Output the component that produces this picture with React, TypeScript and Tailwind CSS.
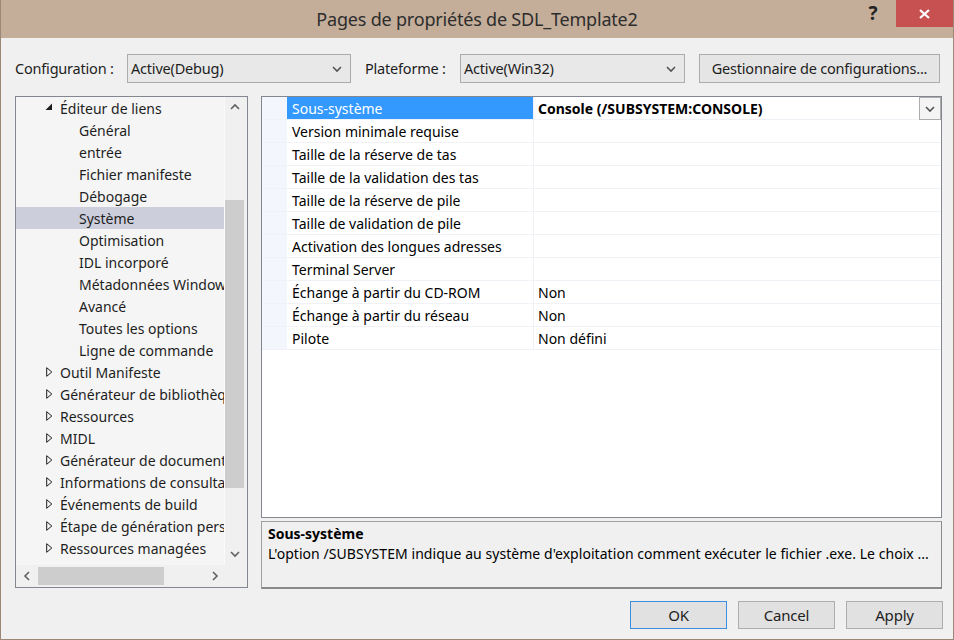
import React from 'react';

type TreeItem = {
  label: string;
  level: 1 | 2;
  expander?: 'open' | 'closed';
  selected?: boolean;
};

const treeItems: TreeItem[] = [
  { label: 'Éditeur de liens', level: 1, expander: 'open' },
  { label: 'Général', level: 2 },
  { label: 'entrée', level: 2 },
  { label: 'Fichier manifeste', level: 2 },
  { label: 'Débogage', level: 2 },
  { label: 'Système', level: 2, selected: true },
  { label: 'Optimisation', level: 2 },
  { label: 'IDL incorporé', level: 2 },
  { label: 'Métadonnées Windows', level: 2 },
  { label: 'Avancé', level: 2 },
  { label: 'Toutes les options', level: 2 },
  { label: 'Ligne de commande', level: 2 },
  { label: 'Outil Manifeste', level: 1, expander: 'closed' },
  { label: 'Générateur de bibliothèque', level: 1, expander: 'closed' },
  { label: 'Ressources', level: 1, expander: 'closed' },
  { label: 'MIDL', level: 1, expander: 'closed' },
  { label: 'Générateur de document XML', level: 1, expander: 'closed' },
  { label: 'Informations de consultation', level: 1, expander: 'closed' },
  { label: 'Événements de build', level: 1, expander: 'closed' },
  { label: 'Étape de génération personnalisée', level: 1, expander: 'closed' },
  { label: 'Ressources managées', level: 1, expander: 'closed' },
];

const props: { name: string; value: string }[] = [
  { name: 'Sous-système', value: 'Console (/SUBSYSTEM:CONSOLE)' },
  { name: 'Version minimale requise', value: '' },
  { name: 'Taille de la réserve de tas', value: '' },
  { name: 'Taille de la validation des tas', value: '' },
  { name: 'Taille de la réserve de pile', value: '' },
  { name: 'Taille de validation de pile', value: '' },
  { name: 'Activation des longues adresses', value: '' },
  { name: 'Terminal Server', value: '' },
  { name: 'Échange à partir du CD-ROM', value: 'Non' },
  { name: 'Échange à partir du réseau', value: 'Non' },
  { name: 'Pilote', value: 'Non défini' },
];

// small chevrons used by combos and scrollbars
const Chevron = ({ dir, color = '#606060' }: { dir: 'up' | 'down' | 'left' | 'right'; color?: string }) => {
  const pts = {
    up: '1,6 5,2 9,6',
    down: '1,2 5,6 9,2',
    left: '6,1 2,5 6,9',
    right: '2,1 6,5 2,9',
  }[dir];
  const vertical = dir === 'up' || dir === 'down';
  return (
    <svg width={vertical ? 10 : 8} height={vertical ? 8 : 10} viewBox={vertical ? '0 0 10 8' : '0 0 8 10'}>
      <polyline points={pts} fill="none" stroke={color} strokeWidth="1.6" />
    </svg>
  );
};

const Combo = ({ text, width }: { text: string; width: string }) => (
  <div className={`${width} h-[29px] flex items-center justify-between border border-[#acacac] bg-[#e8e8e8] pl-[3px] pr-[8px]`}>
    <span>{text}</span>
    <Chevron dir="down" color="#555" />
  </div>
);

const WinButton = ({ label, primary }: { label: string; primary?: boolean }) => (
  <div
    className={`w-[97px] h-[28px] flex items-center justify-center bg-[#e1e1e1] border ${
      primary ? 'border-[#3c8ee0]' : 'border-[#adadad]'
    }`}
  >
    {label}
  </div>
);

export default function App() {
  return (
    <div className="w-[954px] h-[640px] bg-[#f0f0f0] border-x border-b border-[#9c8876] flex flex-col font-['Noto_Sans','DejaVu_Sans',sans-serif] text-[14px] text-[#1e1e1e] overflow-hidden">
      {/* title bar */}
      <div className="relative h-[38px] shrink-0 bg-[#c4ae9a] flex items-center justify-center">
        <span className="text-[18px] text-[#2d2d2d] tracking-[-0.2px]">Pages de propriétés de SDL_Template2</span>
        <div className="absolute right-0 top-0 flex">
          <div className="w-[46px] h-[27px] flex items-center justify-center text-[19px] font-bold text-[#222]">?</div>
          <div className="w-[57px] h-[27px] bg-[#c75050] flex items-center justify-center">
            <svg width="11" height="10" viewBox="0 0 11 10">
              <path d="M1 1 L10 9 M10 1 L1 9" stroke="white" strokeWidth="2.2" />
            </svg>
          </div>
        </div>
      </div>

      {/* configuration row */}
      <div className="flex items-center mt-[16px] pl-[14px] pr-[13px] h-[29px] text-[14.5px] tracking-[-0.2px]">
        <span className="w-[112px]">Configuration :</span>
        <Combo text="Active(Debug)" width="w-[224px]" />
        <span className="ml-[14px] w-[95px]">Plateforme :</span>
        <Combo text="Active(Win32)" width="w-[225px]" />
        <div className="ml-[14px] w-[241px] h-[29px] flex items-center justify-center border border-[#acacac] bg-[#e5e5e5]">
          Gestionnaire de configurations...
        </div>
      </div>

      {/* main area */}
      <div className="flex mt-[13px] pl-[14px] gap-[13px]">
        {/* tree */}
        <div className="w-[233px] h-[492px] border border-[#828790] flex flex-col">
          <div className="flex h-[468px]">
            <div className="w-[209px] bg-[#f5f5f5] overflow-hidden border-r border-[#fafafa]">
              {treeItems.map((it) => (
                <div
                  key={it.label}
                  className={`h-[22px] flex items-center whitespace-nowrap ${it.selected ? 'bg-[#cccedb]' : ''}`}
                >
                  {it.level === 1 ? (
                    <>
                      <span className="w-[44px] shrink-0 flex justify-end pr-[7px]">
                        {it.expander === 'open' ? (
                          <svg width="8" height="8" viewBox="0 0 8 8" className="mt-[-2px]">
                            <polygon points="7,0.5 7,7 0.5,7" fill="#1e1e1e" />
                          </svg>
                        ) : (
                          <svg width="7" height="10" viewBox="0 0 7 10" className="ml-[2px]">
                            <polygon points="0.7,0.7 5.8,5 0.7,9.3" fill="none" stroke="#1e1e1e" strokeWidth="1" />
                          </svg>
                        )}
                      </span>
                      <span>{it.label}</span>
                    </>
                  ) : (
                    <span className="pl-[63px]">{it.label}</span>
                  )}
                </div>
              ))}
            </div>
            {/* vertical scrollbar */}
            <div className="w-[22px] bg-[#f0f0f0] flex flex-col items-center pr-[2px]">
              <div className="h-[20px] flex items-center justify-center">
                <Chevron dir="up" />
              </div>
              <div className="flex-1 w-full">
                <div className="mt-[83px] h-[288px] w-[19px] bg-[#cdcdcd]" />
              </div>
              <div className="h-[22px] flex items-center justify-center">
                <Chevron dir="down" />
              </div>
            </div>
          </div>
          {/* horizontal scrollbar */}
          <div className="flex h-[22px] bg-[#f0f0f0] items-center">
            <div className="w-[22px] flex justify-center">
              <Chevron dir="left" />
            </div>
            <div className="w-[126px] h-[18px] bg-[#cdcdcd]" />
            <div className="w-[61px] flex justify-end pr-[6px]">
              <Chevron dir="right" />
            </div>
          </div>
        </div>

        {/* right column */}
        <div className="w-[681px] flex flex-col">
          <div className="h-[422px] border border-[#828790] bg-white">
            {props.map((p, i) => (
              <div key={p.name} className="flex h-[23px] border-b border-[#f0f2f7]">
                <div className="w-[25px] bg-[#f3f6fc]" />
                <div
                  className={`w-[247px] pl-[5px] flex items-center whitespace-nowrap border-r border-[#f0f2f7] ${
                    i === 0 ? 'bg-[#3399ff] text-white' : 'text-black'
                  }`}
                >
                  {p.name}
                </div>
                <div className={`flex-1 flex items-center pl-[4px] text-black ${i === 0 ? 'font-bold' : ''}`}>
                  {p.value}
                </div>
                {i === 0 && (
                  <div className="w-[22px] h-[23px] border border-[#acacac] bg-[#f4f4f4] flex items-center justify-center">
                    <Chevron dir="down" color="#555" />
                  </div>
                )}
              </div>
            ))}
          </div>

          <div className="mt-[3px] h-[68px] border border-[#a0a0a0] border-b-2 border-b-[#8a8a8a] border-r-[#8a8a8a] px-[6px] pt-[2px] text-[14px] text-black">
            <div className="font-bold h-[20px] leading-[20px]">Sous-système</div>
            <div className="h-[20px] leading-[20px] whitespace-nowrap tracking-[0.05px]">
              L'option /SUBSYSTEM indique au système d'exploitation comment exécuter le fichier .exe. Le choix ...
            </div>
          </div>
        </div>
      </div>

      {/* bottom buttons */}
      <div className="flex justify-end gap-[11px] mt-[12px] pr-[10px] text-[15px] tracking-[-0.2px]">
        <WinButton label="OK" primary />
        <WinButton label="Cancel" />
        <WinButton label="Apply" />
      </div>
    </div>
  );
}
